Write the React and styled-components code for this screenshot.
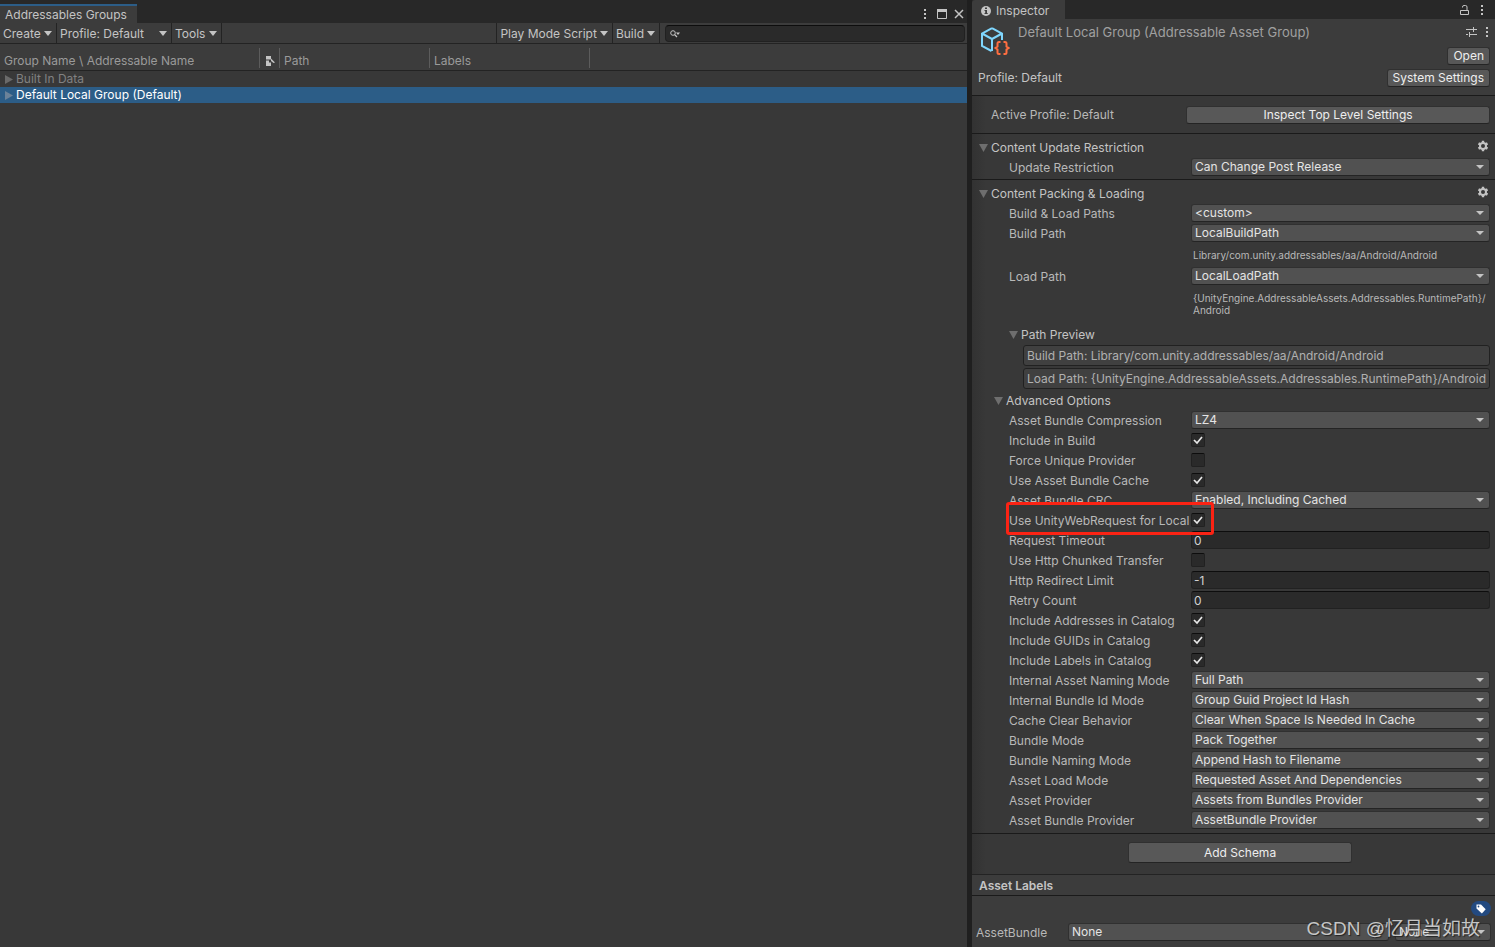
import React, { useState } from "react";
import styled, { createGlobalStyle, css } from "styled-components";

const GlobalStyle = createGlobalStyle`
  * {
    box-sizing: border-box;
  }
  body {
    margin: 0;
    background: #191919;
    color: #c4c4c4;
    font-family: Inter, "Noto Sans CJK SC", sans-serif;
    font-size: 12px;
    line-height: 16px;
  }
  button, input, select {
    font: inherit;
    color: inherit;
    margin: 0;
  }
  button {
    border: none;
    background: none;
    padding: 0;
  }
`;

const Page = styled.div`
  display: grid;
  grid-template-columns: minmax(0, 967fr) minmax(0, 523fr);
  column-gap: 5px;
  min-height: 100vh;
  border-bottom: 2px solid #191919;
  background: #1f1f1f;
`;

/* ---------- groups window ---------- */

const Groups = styled.section`
  background: #383838;
`;

const TabBar = styled.div`
  display: flex;
  justify-content: space-between;
  background: #282828;
  height: ${(props) => props.$height}px;
  padding-top: ${(props) => props.$top || 0}px;
`;

const GroupsTab = styled.h2`
  margin: 0;
  padding: 1px 10px 0 5px;
  border-top: 2px solid #2c5d87;
  background: #3c3c3c;
  font-size: 12px;
  font-weight: 400;
`;

const WindowButtons = styled.div`
  display: flex;
  align-items: center;
  padding-right: ${(props) => props.$right || 0}px;
`;

const IconButton = styled.button`
  display: flex;
  align-items: center;
  justify-content: center;
  width: ${(props) => (props.$wide ? "17px" : "auto")};
  height: 16px;
`;

const Toolbar = styled.div`
  display: flex;
  height: 21px;
  background: #3c3c3c;
  border-bottom: 1px solid #232323;
`;

const ToolbarButton = styled.button`
  display: flex;
  align-items: center;
  justify-content: space-between;
  gap: 3px;
  padding: 1px 4px 0 3px;
  min-width: ${(props) => props.$width || 0}px;
  border-right: 1px solid #232323;
  white-space: nowrap;
`;

const Spacer = styled.div`
  flex: 1;
  border-right: 1px solid #232323;
`;

const Search = styled.label`
  display: flex;
  align-items: center;
  flex: 0 1 300px;
  height: 17px;
  margin: 2px 2px 0 5px;
  padding: 0 4px;
  border: 1px solid #212121;
  border-top-color: #0d0d0d;
  border-radius: 4px;
  background: #2a2a2a;
`;

const SearchInput = styled.input`
  flex: 1;
  min-width: 0;
  height: 14px;
  border: none;
  outline: none;
  background: none;
`;

const Table = styled.table`
  width: 100%;
  table-layout: fixed;
  border-spacing: 0;
`;

const Th = styled.th`
  width: ${(props) => (props.$width ? props.$width + "px" : "auto")};
  height: 27px;
  padding: 4px 0 2px;
  border-bottom: 1px solid #232323;
  background: #3c3c3c;
  color: #9a9a9a;
  font-weight: 400;
  text-align: left;
`;

const ThLabel = styled.div`
  display: flex;
  align-items: center;
  height: 20px;
  padding: 6px 0 0 ${(props) => (props.$icon ? 6 : 4)}px;
  border-right: ${(props) => (props.$last ? "none" : "1px solid #5c5c5c")};
`;

const Tr = styled.tr`
  background: ${(props) => (props.$selected ? "#2c5d87" : "none")};
  color: ${(props) => (props.$selected ? "#ffffff" : "#818181")};
`;

const Td = styled.td`
  height: 16px;
  padding: 0;
`;

const TreeItem = styled.div`
  display: flex;
  align-items: center;
  gap: 3px;
  padding-left: 5px;
`;

/* ---------- inspector ---------- */

const Inspector = styled.section`
  position: relative;
  background: linear-gradient(90deg, #323232, #383838 14px);
`;

const InspectorTab = styled.h2`
  display: flex;
  align-items: center;
  gap: 5px;
  margin: 0;
  padding: 3px 16px 0 9px;
  border-radius: 3px 0 0 0;
  background: #3c3c3c;
  font-size: 12px;
  font-weight: 400;
`;

const Header = styled.header`
  height: 77px;
  padding-right: 5px;
  background: #3c3c3c;
  border-bottom: 1px solid #1a1a1a;
`;

const HeaderTop = styled.div`
  display: flex;
  height: 50px;
  padding: 4px 0 0 8px;
`;

const HeaderIcon = styled.svg`
  margin: 4px 8px 0 0;
`;

const Title = styled.h1`
  flex: 1;
  margin: 0;
  color: #a0a0a0;
  font-size: 13px;
  line-height: 18px;
  font-weight: 400;
`;

const HeaderSide = styled.div`
  display: flex;
  flex-direction: column;
  align-items: flex-end;
  gap: 7px;
`;

const HeaderTools = styled.div`
  display: flex;
  align-items: center;
  gap: 8px;
  height: 17px;
  padding-right: 1px;
`;

const HeaderBottom = styled.div`
  display: flex;
  align-items: center;
  justify-content: space-between;
  padding-left: 6px;
`;

const Button = styled.button`
  height: ${(props) => (props.$tall ? 21 : 18)}px;
  width: ${(props) => props.$width || "auto"};
  padding: 0 5px;
  border: 1px solid #303030;
  border-bottom-color: #242424;
  border-radius: 3px;
  background: #585858;
  color: #eeeeee;
  line-height: 16px;
`;

const ProfileRow = styled.div`
  display: grid;
  grid-template-columns: 195px 1fr;
  align-items: center;
  height: 38px;
  padding: 0 5px 0 19px;
  border-bottom: 1px solid #1a1a1a;
  color: #b8b8b8;
`;

const Section = styled.section`
  padding: 4px 5px ${(props) => (props.$last ? 2 : 1)}px 7px;
  border-bottom: 1px solid #1a1a1a;
`;

const FoldoutRow = styled.div`
  display: flex;
  justify-content: space-between;
  height: 20px;
  padding: 0 1px 0 ${(props) => props.$indent || 0}px;
`;

const FoldoutButton = styled.button`
  display: flex;
  align-items: center;
  gap: 3px;
  height: 20px;
`;

const Row = styled.div`
  position: relative;
  display: grid;
  grid-template-columns: 182px minmax(0, 1fr);
  height: 20px;
  padding-left: 30px;
`;

const Label = styled.label`
  color: #b8b8b8;
  line-height: 20px;
  white-space: nowrap;
`;

const SelectBox = styled.div`
  position: relative;
  height: 18px;
  flex: ${(props) => props.$grow || "none"};
  min-width: 0;
`;

const SelectField = styled.select`
  display: block;
  width: 100%;
  height: 18px;
  padding: 0 18px 1px 3px;
  appearance: none;
  border: 1px solid #303030;
  border-bottom-color: #242424;
  border-radius: 3px;
  background: #515151;
  color: #e4e4e4;
  line-height: 15px;
`;

const SelectArrow = styled.svg`
  position: absolute;
  top: 7px;
  right: 6px;
  pointer-events: none;
`;

const field = css`
  width: 100%;
  padding: 0 3px;
  border: 1px solid #212121;
  border-radius: 3px;
  outline: none;
`;

const TextField = styled.input`
  ${field}
  height: 18px;
  padding: 0 2px;
  border-top-color: #0d0d0d;
  background: #2a2a2a;
  color: #d2d2d2;
`;

const PreviewField = styled.input`
  ${field}
  display: block;
  height: 21px;
  background: #404040;
  color: #b0b0b0;
`;

const Previews = styled.div`
  display: grid;
  gap: 2px;
  padding: 0 0 2px 44px;
`;

const CheckBox = styled.span`
  display: grid;
  width: 14px;
  height: 14px;
  margin-top: 2px;
`;

const CheckInput = styled.input`
  grid-area: 1 / 1;
  width: 14px;
  height: 14px;
  appearance: none;
  border: 1px solid #212121;
  border-top-color: #0d0d0d;
  border-radius: 2px;
  background: #2a2a2a;
`;

const CheckMark = styled.svg`
  grid-area: 1 / 1;
  z-index: 1;
  pointer-events: none;
`;

const PathNote = styled.p`
  margin: 0;
  padding: 5px 0 ${(props) => props.$bottom}px 214px;
  color: #b8b8b8;
  font-size: 10px;
  line-height: 12px;
`;

const Highlight = styled.div`
  position: absolute;
  z-index: 2;
  top: -9px;
  left: 27px;
  width: 208px;
  height: 33px;
  border: 3px solid #fb2314;
  border-radius: 3px;
  pointer-events: none;
`;

const AddSchema = styled.div`
  display: flex;
  justify-content: center;
  height: 41px;
  padding: 8px 0 0 13px;
  border-bottom: 1px solid #232323;
`;

const LabelsTitle = styled.h3`
  height: 21px;
  margin: 0;
  padding-left: 7px;
  border-bottom: 1px solid #1a1a1a;
  background: #3c3c3c;
  font-size: 12px;
  line-height: 22px;
  font-weight: 600;
`;

const LabelsBody = styled.div`
  padding: 5px 4px 4px;
  background: #3c3c3c;
`;

const TagButton = styled.button`
  display: flex;
  align-items: center;
  justify-content: center;
  width: 20px;
  height: 15px;
  margin: 0 0 7px auto;
  border-radius: 8px;
  background: #234a80;
`;

const BundleRow = styled.div`
  display: flex;
  gap: 6px;
`;

const BundleLabel = styled.label`
  width: 86px;
  color: #b8b8b8;
  line-height: 20px;
`;

const Watermark = styled.div`
  position: absolute;
  z-index: 3;
  right: 15px;
  bottom: 4px;
  color: rgba(225, 225, 225, 0.85);
  font-family: "Liberation Sans", "Noto Sans CJK SC", sans-serif;
  font-size: 19px;
  line-height: 28px;
  text-shadow: 1px 1px 1px #222222;
  white-space: nowrap;
  pointer-events: none;
`;

/* ---------- icons ---------- */

const Caret = () => (
  <svg width="8" height="5" viewBox="0 0 8 5">
    <path d="M0 0h8L4 5z" fill="#c4c4c4" />
  </svg>
);

const FoldDown = () => (
  <svg width="9" height="8" viewBox="0 0 9 8">
    <path d="M0 0h9L4.500 8z" fill="#6e6e6e" />
  </svg>
);

const FoldRight = ({ color }) => (
  <svg width="8" height="9" viewBox="0 0 8 9">
    <path d="M0 0l8 4.500L0 9z" fill={color} />
  </svg>
);

const Dots = () => (
  <svg width="4" height="12" viewBox="0 0 4 12" fill="#c4c4c4">
    <path d="M1 1h2v2H1zM1 5h2v2H1zM1 9h2v2H1z" />
  </svg>
);

const Gear = () => (
  <svg width="12" height="12" viewBox="0 0 12 12" fill="none" stroke="#c4c4c4">
    <circle cx="6" cy="6" r="3" strokeWidth="2" />
    <path
      d="M6 .8v2M6 9.200v2M1.500 3.400l1.700 1M8.800 7.600l1.700 1M1.500 8.600l1.700-1M8.800 4.400l1.700-1"
      strokeWidth="2.400"
    />
  </svg>
);

const MaximizeIcon = () => (
  <svg width="10" height="10" viewBox="0 0 10 10">
    <path d="M.5.500h9v9h-9z" fill="none" stroke="#c4c4c4" />
    <path d="M0 0h10v3H0z" fill="#c4c4c4" />
  </svg>
);

const CloseIcon = () => (
  <svg width="10" height="10" viewBox="0 0 10 10">
    <path d="M1 1l8 8M9 1L1 9" stroke="#c4c4c4" strokeWidth="1.500" />
  </svg>
);

const SearchIcon = () => (
  <svg width="10" height="8" viewBox="0 0 10 8" fill="none" stroke="#c4c4c4">
    <circle cx="3" cy="3" r="2.300" />
    <path d="M4.600 4.600L7 7" strokeWidth="1.300" />
    <path d="M6 2.500h4L8 5z" fill="#c4c4c4" stroke="none" />
  </svg>
);

const AssetTypeIcon = () => (
  <svg width="9" height="10" viewBox="0 0 9 10" fill="#c4c4c4">
    <path d="M0 0h5v3.500H0zM0 4.500h3v2h2V10H0zM5 2.500L9 6.500 7.500 7 5 5z" />
  </svg>
);

const InfoIcon = () => (
  <svg width="10" height="10" viewBox="0 0 10 10">
    <circle cx="5" cy="5" r="5" fill="#c4c4c4" />
    <path d="M4 1.500h2v1.500H4zM3.500 4H6v3h.7v1H3.500V7h.7V5h-.7z" fill="#3c3c3c" />
  </svg>
);

const LockIcon = () => (
  <svg width="9" height="10" viewBox="0 0 9 10" fill="none" stroke="#c4c4c4">
    <path d="M.5 5.500h8v4h-8zM2.500 2.500V2A1.500 1.500 0 0 1 4 .5h1.500A1.500 1.500 0 0 1 7 2v3.500" />
  </svg>
);

const PresetIcon = () => (
  <svg width="11" height="10" viewBox="0 0 11 10" stroke="#c4c4c4" fill="none">
    <path d="M0 2.500h7M7 2.500h4M7.500 0v5M0 7.500h2M4 7.500h7M3.500 5v5" />
  </svg>
);

const TagIcon = () => (
  <svg width="10" height="10" viewBox="0 0 10 10">
    <path d="M.5.500h4.500l4.700 4.700-3.800 4.300L.5 4.500z" fill="#ffffff" />
    <circle cx="2.500" cy="2.500" r=".9" fill="#234a80" />
  </svg>
);

/* ---------- data ---------- */

const options = [
  { label: "Asset Bundle Compression", type: "select", value: "LZ4" },
  { label: "Include in Build", type: "check", value: true },
  { label: "Force Unique Provider", type: "check", value: false },
  { label: "Use Asset Bundle Cache", type: "check", value: true },
  { label: "Asset Bundle CRC", type: "select", value: "Enabled, Including Cached" },
  { label: "Use UnityWebRequest for Local", type: "check", value: true, marked: true },
  { label: "Request Timeout", type: "text", value: "0" },
  { label: "Use Http Chunked Transfer", type: "check", value: false },
  { label: "Http Redirect Limit", type: "text", value: "-1" },
  { label: "Retry Count", type: "text", value: "0" },
  { label: "Include Addresses in Catalog", type: "check", value: true },
  { label: "Include GUIDs in Catalog", type: "check", value: true },
  { label: "Include Labels in Catalog", type: "check", value: true },
  { label: "Internal Asset Naming Mode", type: "select", value: "Full Path" },
  { label: "Internal Bundle Id Mode", type: "select", value: "Group Guid Project Id Hash" },
  { label: "Cache Clear Behavior", type: "select", value: "Clear When Space Is Needed In Cache" },
  { label: "Bundle Mode", type: "select", value: "Pack Together" },
  { label: "Bundle Naming Mode", type: "select", value: "Append Hash to Filename" },
  { label: "Asset Load Mode", type: "select", value: "Requested Asset And Dependencies" },
  { label: "Asset Provider", type: "select", value: "Assets from Bundles Provider" },
  { label: "Asset Bundle Provider", type: "select", value: "AssetBundle Provider" },
];

const toId = (label) => label.toLowerCase().replace(/[^a-z]+/g, "-");

/* ---------- parts ---------- */

const Select = ({ id, value, grow, ariaLabel }) => (
  <SelectBox $grow={grow}>
    <SelectField id={id} defaultValue={value} aria-label={ariaLabel}>
      <option value={value}>{value}</option>
    </SelectField>
    <SelectArrow width="8" height="4" viewBox="0 0 8 4">
      <path d="M0 0h8L4 4z" fill="#c4c4c4" />
    </SelectArrow>
  </SelectBox>
);

const Check = ({ id, value }) => {
  const [checked, setChecked] = useState(value);

  return (
    <CheckBox>
      <CheckInput
        id={id}
        type="checkbox"
        checked={checked}
        onChange={(e) => setChecked(e.target.checked)}
      />
      {checked && (
        <CheckMark width="14" height="14" viewBox="0 0 14 14">
          <path d="M3 7l3 3 5-6" fill="none" stroke="#e8e8e8" strokeWidth="1.700" />
        </CheckMark>
      )}
    </CheckBox>
  );
};

const Property = ({ label, type, value, marked }) => {
  const id = toId(label);

  return (
    <Row>
      <Label htmlFor={id}>{label}</Label>
      {type === "select" && <Select id={id} value={value} />}
      {type === "check" && <Check id={id} value={value} />}
      {type === "text" && <TextField id={id} defaultValue={value} />}
      {marked && <Highlight />}
    </Row>
  );
};

const Foldout = ({ title, indent, gear, children }) => {
  const [open, setOpen] = useState(true);

  return (
    <>
      <FoldoutRow $indent={indent}>
        <FoldoutButton aria-expanded={open} onClick={() => setOpen(!open)}>
          {open ? <FoldDown /> : <FoldRight color="#6e6e6e" />}
          {title}
        </FoldoutButton>
        {gear && (
          <IconButton aria-label={title + " settings"}>
            <Gear />
          </IconButton>
        )}
      </FoldoutRow>
      {open && children}
    </>
  );
};

const GroupsWindow = () => (
  <Groups>
    <TabBar $height={23} $top={4}>
      <GroupsTab>Addressables Groups</GroupsTab>
      <WindowButtons>
        <IconButton $wide aria-label="Menu"><Dots /></IconButton>
        <IconButton $wide aria-label="Maximize"><MaximizeIcon /></IconButton>
        <IconButton $wide aria-label="Close"><CloseIcon /></IconButton>
      </WindowButtons>
    </TabBar>
    <Toolbar>
      <ToolbarButton $width={57}>Create <Caret /></ToolbarButton>
      <ToolbarButton $width={115}>Profile: Default <Caret /></ToolbarButton>
      <ToolbarButton $width={50}>Tools <Caret /></ToolbarButton>
      <Spacer />
      <ToolbarButton $width={115}>Play Mode Script <Caret /></ToolbarButton>
      <ToolbarButton $width={47}>Build <Caret /></ToolbarButton>
      <Search>
        <SearchIcon />
        <SearchInput type="text" aria-label="Search groups" />
      </Search>
    </Toolbar>
    <Table>
      <thead>
        <tr>
          <Th $width={260}><ThLabel>Group Name \ Addressable Name</ThLabel></Th>
          <Th $width={20}><ThLabel $icon><AssetTypeIcon /></ThLabel></Th>
          <Th $width={150}><ThLabel>Path</ThLabel></Th>
          <Th $width={160}><ThLabel>Labels</ThLabel></Th>
          <Th><ThLabel $last /></Th>
        </tr>
      </thead>
      <tbody>
        <Tr>
          <Td colSpan={5}>
            <TreeItem><FoldRight color="#6a6a6a" />Built In Data</TreeItem>
          </Td>
        </Tr>
        <Tr $selected>
          <Td colSpan={5}>
            <TreeItem><FoldRight color="#6b8299" />Default Local Group (Default)</TreeItem>
          </Td>
        </Tr>
      </tbody>
    </Table>
  </Groups>
);

const InspectorWindow = () => (
  <Inspector>
    <TabBar $height={19}>
      <InspectorTab><InfoIcon />Inspector</InspectorTab>
      <WindowButtons $right={5}>
        <IconButton $wide aria-label="Lock"><LockIcon /></IconButton>
        <IconButton $wide aria-label="Menu"><Dots /></IconButton>
      </WindowButtons>
    </TabBar>
    <Header>
      <HeaderTop>
        <HeaderIcon width="30" height="29" viewBox="0 0 30 29" fill="none">
          <path
            d="M12 1.200L22 6.500V13M12 1.200L2 6.500v12.500l9.500 5M2 6.500l10 5.500 10-5.500M12 12v12"
            stroke="#7fd6fd"
            strokeWidth="2"
          />
          <path
            d="M20.500 15H19q-1.500 0-1.500 1.500v3L15.500 21l2 1.500v3q0 1.500 1.500 1.500h1.500M23.500 15H25q1.500 0 1.500 1.500v3l2 1.500-2 1.500v3Q26.500 27 25 27h-1.500"
            stroke="#ff6e40"
            strokeWidth="2"
          />
        </HeaderIcon>
        <Title>Default Local Group (Addressable Asset Group)</Title>
        <HeaderSide>
          <HeaderTools>
            <IconButton aria-label="Presets"><PresetIcon /></IconButton>
            <IconButton aria-label="More"><Dots /></IconButton>
          </HeaderTools>
          <Button>Open</Button>
        </HeaderSide>
      </HeaderTop>
      <HeaderBottom>
        Profile: Default
        <Button>System Settings</Button>
      </HeaderBottom>
    </Header>
    <ProfileRow>
      Active Profile: Default
      <Button>Inspect Top Level Settings</Button>
    </ProfileRow>
    <Section>
      <Foldout title="Content Update Restriction" gear>
        <Property label="Update Restriction" type="select" value="Can Change Post Release" />
      </Foldout>
    </Section>
    <Section $last>
      <Foldout title="Content Packing &amp; Loading" gear>
        <Property label="Build &amp; Load Paths" type="select" value="<custom>" />
        <Property label="Build Path" type="select" value="LocalBuildPath" />
        <PathNote $bottom={6}>Library/com.unity.addressables/aa/Android/Android</PathNote>
        <Property label="Load Path" type="select" value="LocalLoadPath" />
        <PathNote $bottom={9}>
          {"{UnityEngine.AddressableAssets.Addressables.RuntimePath}/"}
          <wbr />
          Android
        </PathNote>
        <Foldout title="Path Preview" indent={30}>
          <Previews>
            <PreviewField
              readOnly
              aria-label="Build path preview"
              value="Build Path: Library/com.unity.addressables/aa/Android/Android"
            />
            <PreviewField
              readOnly
              aria-label="Load path preview"
              value="Load Path: {UnityEngine.AddressableAssets.Addressables.RuntimePath}/Android"
            />
          </Previews>
        </Foldout>
        <Foldout title="Advanced Options" indent={15}>
          {options.map((option) => (
            <Property key={option.label} {...option} />
          ))}
        </Foldout>
      </Foldout>
    </Section>
    <AddSchema>
      <Button $tall $width="224px">Add Schema</Button>
    </AddSchema>
    <LabelsTitle>Asset Labels</LabelsTitle>
    <LabelsBody>
      <TagButton aria-label="Edit labels"><TagIcon /></TagButton>
      <BundleRow>
        <BundleLabel htmlFor="asset-bundle">AssetBundle</BundleLabel>
        <Select id="asset-bundle" value="None" grow="321 1 0" />
        <Select value="None" grow="96 1 0" ariaLabel="AssetBundle variant" />
      </BundleRow>
    </LabelsBody>
    <Watermark>CSDN @忆月当如故</Watermark>
  </Inspector>
);

const App = () => {
  return (
    <Page>
      <GlobalStyle />
      <GroupsWindow />
      <InspectorWindow />
    </Page>
  );
};

export default App;
